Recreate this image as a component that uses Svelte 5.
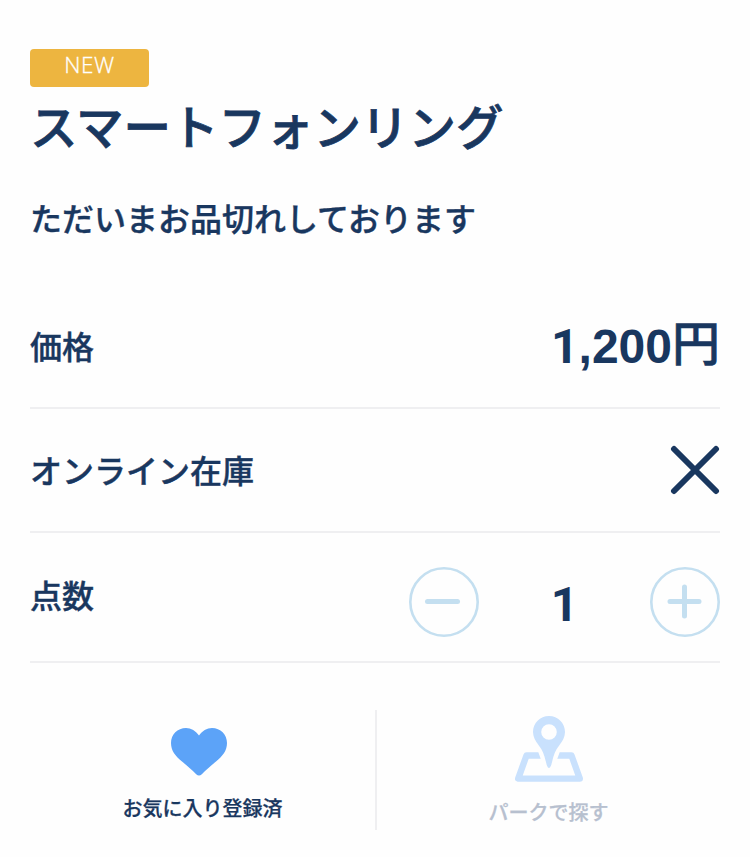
<script lang="ts">
	let quantity = $state(1);

	const price = 1200;
	const inStock = false;
</script>

{#snippet digits(value: string)}
	{#each value as char}<span class:one={char === '1'}>{char}</span>{/each}
{/snippet}

<main class="product">
	<span class="badge">NEW</span>
	<h1>スマートフォンリング</h1>
	<p class="notice">ただいまお品切れしております</p>

	<div class="row price-row">
		<span class="label">価格</span>
		<span class="price">{@render digits(price.toLocaleString('en-US'))}<span class="yen">円</span></span>
	</div>

	<div class="row stock-row">
		<span class="label">オンライン在庫</span>
		{#if !inStock}
			<svg class="cross" viewBox="0 0 50 50" role="img" aria-label="在庫なし">
				<path d="M4 4 L46 46 M46 4 L4 46" />
			</svg>
		{/if}
	</div>

	<div class="row quantity-row">
		<span class="label">点数</span>
		<div class="stepper">
			<button aria-label="減らす" onclick={() => (quantity = Math.max(1, quantity - 1))}>
				<svg viewBox="0 0 70 70">
					<circle cx="35" cy="35" r="33.7" />
					<path d="M18.5 34.5 H48.5" />
				</svg>
			</button>
			<span class="count">{@render digits(String(quantity))}</span>
			<button aria-label="増やす" onclick={() => quantity++}>
				<svg viewBox="0 0 70 70">
					<circle cx="35" cy="35" r="33.7" />
					<path d="M20 34.5 H49 M34.5 20 V49" />
				</svg>
			</button>
		</div>
	</div>

	<div class="actions">
		<button class="action favorite">
			<svg class="heart" viewBox="0 0 56 48">
				<path d="M28 7.5 C25 3 20 0 15 0 C6.5 0 0 6.5 0 15 C0 23 4.5 28 11 33.5 C17 38.5 20.5 41.5 25.2 46.3 C27 48 29 48 30.8 46.3 C35.5 41.5 39 38.5 45 33.5 C51.5 28 56 23 56 15 C56 6.5 49.5 0 41 0 C36 0 31 3 28 7.5 Z" />
			</svg>
			<span>お気に入り登録済</span>
		</button>
		<button class="action park">
			<svg class="map" viewBox="0 0 68 67">
				<path class="sheet" d="M26 39.5 H11.5 L3.2 62.6 H64.8 L56.5 39.5 H42" />
				<path class="gap" d="M22.5 34 L28 49 H40 L45.5 34 Z" />
				<path class="pin" fill-rule="evenodd" d="M34 0 C25 0 18 7 18 16 C18 21 20.5 25 23.5 29 C28 35 29 38.5 30.7 45 C31.5 48 32.3 52 34 52 C35.7 52 36.5 48 37.3 45 C39 38.5 40 35 44.5 29 C47.5 25 50 21 50 16 C50 7 43 0 34 0 Z M34 8.2 A7.8 7.8 0 1 1 34 23.8 A7.8 7.8 0 1 1 34 8.2 Z" />
			</svg>
			<span>パークで探す</span>
		</button>
	</div>
</main>

<style>
	:global(body) {
		background: #fefefe;
	}

	.product {
		box-sizing: border-box;
		width: 750px;
		height: 857px;
		padding: 49px 30px 0;
		overflow: hidden;
		color: #19375f;
		font-family: 'Liberation Sans', 'Noto Sans CJK JP', sans-serif;
		font-weight: 700;
	}

	.badge {
		display: block;
		width: 119px;
		height: 38px;
		border-radius: 4px;
		background: #edb540;
		color: #fff;
		font-family: 'Open Sans', sans-serif;
		font-size: 22.5px;
		font-weight: 300;
		letter-spacing: 0.6px;
		line-height: 32px;
		text-align: center;
		-webkit-text-stroke: 0.3px;
	}

	h1 {
		margin: 6px 0 0;
		font-family: 'Noto Sans CJK JP', sans-serif;
		font-size: 47.5px;
		font-weight: 500;
		line-height: 64px;
		-webkit-text-stroke: 0.8px;
	}

	.notice {
		margin: 38px 0 0;
		font-family: 'Noto Sans CJK JP', sans-serif;
		font-size: 32px;
		font-weight: 500;
		line-height: 44px;
		-webkit-text-stroke: 0.4px;
	}

	.row {
		box-sizing: border-box;
		display: flex;
		align-items: center;
		justify-content: space-between;
		border-bottom: 2px solid #efeff1;
	}

	.price-row {
		height: 124px;
		margin-top: 46px;
	}

	.stock-row {
		height: 124px;
	}

	.quantity-row {
		height: 130px;
	}

	.label {
		padding-bottom: 2px;
		font-family: 'Noto Sans CJK JP', sans-serif;
		font-size: 32px;
		font-weight: 500;
		line-height: 46px;
		-webkit-text-stroke: 0.4px;
	}

	.price {
		padding-top: 2px;
		font-size: 48px;
		line-height: 64px;
	}

	.one {
		font-family: Roboto, sans-serif;
	}

	.yen {
		font-weight: 500;
		line-height: 0;
		vertical-align: 2px;
		-webkit-text-stroke: 0.6px;
	}

	.cross {
		width: 50px;
		height: 50px;
		fill: none;
		stroke: #19375f;
		stroke-width: 6;
		stroke-linecap: round;
	}

	.stepper {
		display: flex;
		align-items: center;
		justify-content: space-between;
		width: 311px;
		padding-top: 10px;
	}

	button {
		padding: 0;
		border: 0;
		background: none;
		color: inherit;
		font: inherit;
	}

	.stepper button {
		width: 70px;
		height: 70px;
	}

	.stepper svg {
		display: block;
		fill: none;
		stroke: #c4dff0;
		stroke-width: 2.6;
		stroke-linecap: round;
	}

	.stepper path {
		stroke-width: 5;
	}

	.count {
		padding-top: 6px;
		font-size: 48px;
		line-height: 64px;
	}

	.quantity-row .label {
		padding-bottom: 6px;
	}

	.actions {
		display: flex;
		height: 120px;
		margin-top: 47px;
	}

	.action {
		display: flex;
		flex-direction: column;
		align-items: center;
		font-family: 'Noto Sans CJK JP', sans-serif;
		font-size: 20px;
		font-weight: 500;
		line-height: 28px;
		-webkit-text-stroke: 0.25px;
	}

	.favorite {
		box-sizing: border-box;
		width: 347px;
		padding-top: 18px;
		border-right: 2px solid #efeff1;
	}

	.park {
		flex: 1;
		padding-top: 6px;
		color: #b7c0cf;
	}

	.heart {
		width: 56px;
		height: 48px;
		margin: 0 8px 18px 0;
		fill: #5ca3f8;
	}

	.map {
		width: 68px;
		height: 67px;
		margin-bottom: 15px;
	}

	.sheet {
		fill: none;
		stroke: #c9e1fd;
		stroke-width: 6.4;
		stroke-linejoin: round;
	}

	.gap {
		fill: #fefefe;
	}

	.pin {
		fill: #c9e1fd;
	}
</style>
